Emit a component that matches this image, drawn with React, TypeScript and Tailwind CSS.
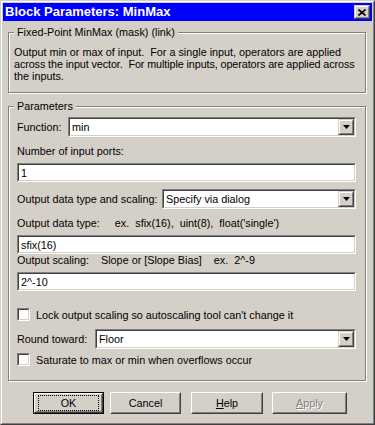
import React from "react";

function Sunken({ className, children }: { className?: string; children?: React.ReactNode }) {
  return (
    <div className={"border border-t-[#808080] border-l-[#808080] border-r-white border-b-white " + (className || "")}>
      <div className="h-full w-full border border-t-[#404040] border-l-[#404040] border-r-[#d4d0c8] border-b-[#d4d0c8] bg-white flex items-center">
        {children}
      </div>
    </div>
  );
}

function Raised({ className, children }: { className?: string; children?: React.ReactNode }) {
  return (
    <div className={"border border-t-[#d4d0c8] border-l-[#d4d0c8] border-r-[#404040] border-b-[#404040] bg-[#d4d0c8] " + (className || "")}>
      <div className="h-full w-full border border-t-white border-l-white border-r-[#808080] border-b-[#808080] flex items-center justify-center">
        {children}
      </div>
    </div>
  );
}

function Combo({ value, className }: { value: string; className?: string }) {
  return (
    <Sunken className={"h-[20px] " + (className || "")}>
      <span className="flex-1 pl-[2px] whitespace-pre">{value}</span>
      <Raised className="w-[16px] h-[16px]">
        <svg width="7" height="4" viewBox="0 0 7 4" className="block">
          <path d="M0 0H7L3.5 4Z" fill="#000" />
        </svg>
      </Raised>
    </Sunken>
  );
}

function Field({ value }: { value: string }) {
  return (
    <Sunken className="h-[19px]">
      <span className="pl-[2px] whitespace-pre">{value}</span>
    </Sunken>
  );
}

function Check({ label }: { label: string }) {
  return (
    <div className="flex items-center h-[13px]">
      <Sunken className="w-[13px] h-[13px]" />
      <span className="ml-[6px] whitespace-pre">{label}</span>
    </div>
  );
}

function GroupBox({ label, className, children }: { label: string; className?: string; children?: React.ReactNode }) {
  return (
    <div className={"relative border border-[#808080] shadow-[inset_1px_1px_0_#fff,1px_1px_0_#fff] " + (className || "")}>
      <span className="absolute top-[-7px] left-[5px] px-[3px] bg-[#d4d0c8] leading-[12px] whitespace-pre">{label}</span>
      {children}
    </div>
  );
}

function Button({ children, className, isDefault }: { children: React.ReactNode; className?: string; isDefault?: boolean }) {
  const inner = (
    <div className="h-full w-full border border-t-white border-l-white border-r-[#404040] border-b-[#404040]">
      <div className="h-full w-full border border-t-[#d4d0c8] border-l-[#d4d0c8] border-r-[#808080] border-b-[#808080] flex items-center justify-center">
        {isDefault ? (
          <div className="w-full h-full m-[2px] border border-dotted border-black flex items-center justify-center">{children}</div>
        ) : (
          children
        )}
      </div>
    </div>
  );
  return (
    <div className={"h-[22px] " + (isDefault ? "border border-black " : "") + (className || "")}>{inner}</div>
  );
}

export default function App() {
  return (
    <div className="w-[375px] h-[425px] bg-[#d4d0c8] border border-t-[#d4d0c8] border-l-[#d4d0c8] border-r-[#404040] border-b-[#404040] font-['Liberation_Sans',Arial,sans-serif] text-[10.8px] leading-[12px] text-black overflow-hidden">
      <div className="h-full border border-t-white border-l-white border-r-[#808080] border-b-[#808080] p-px flex flex-col">
        <div className="h-[18px] bg-[#0000ff] flex items-center pl-[2px] pr-[2px] shrink-0">
          <span className="text-white font-bold text-[13px] flex-1 whitespace-pre">Block Parameters: MinMax</span>
          <Raised className="w-[16px] h-[14px]">
            <svg width="8" height="7" viewBox="0 0 8 7" className="block">
              <path d="M0.5 0.5L7.5 6.5M7.5 0.5L0.5 6.5" stroke="#000" strokeWidth="1.6" />
            </svg>
          </Raised>
        </div>

        <GroupBox label="Fixed-Point MinMax (mask) (link)" className="mt-[11px] ml-[5px] mr-[6px] h-[61px] pt-[13px] pl-[5px] shrink-0">
          <div className="whitespace-pre">Output min or max of input.  For a single input, operators are applied</div>
          <div className="whitespace-pre tracking-[-0.1px]">across the input vector.  For multiple inputs, operators are applied across</div>
          <div className="whitespace-pre">the inputs.</div>
        </GroupBox>

        <GroupBox label="Parameters" className="mt-[13px] ml-[5px] mr-[6px] h-[275px] pl-[8px] pr-[9px] flex flex-col shrink-0">
          <div className="mt-[10px] flex items-center">
            <span className="w-[51px] whitespace-pre">Function:</span>
            <Combo value="min" className="flex-1" />
          </div>
          <div className="mt-[8px] h-[12px] whitespace-pre">Number of input ports:</div>
          <div className="mt-[6px]"><Field value="1" /></div>
          <div className="mt-[7px] flex items-center">
            <span className="w-[145px] whitespace-pre">Output data type and scaling:</span>
            <Combo value="Specify via dialog" className="flex-1" />
          </div>
          <div className="mt-[8px] h-[12px] whitespace-pre">Output data type:     ex.  sfix(16),  uint(8),  float('single')</div>
          <div className="mt-[6px]"><Field value="sfix(16)" /></div>
          <div className="mt-0 h-[12px] whitespace-pre">Output scaling:    Slope or [Slope Bias]    ex.  2^-9</div>
          <div className="mt-[6px]"><Field value="2^-10" /></div>
          <div className="mt-[17px]"><Check label="Lock output scaling so autoscaling tool can't change it" /></div>
          <div className="mt-[8px] flex items-center">
            <span className="w-[78px] whitespace-pre">Round toward:</span>
            <Combo value="Floor" className="flex-1" />
          </div>
          <div className="mt-[4px]"><Check label="Saturate to max or min when overflows occur" /></div>
        </GroupBox>

        <div className="mt-[11px] flex pl-[30px]">
          <Button isDefault className="w-[71px]">OK</Button>
          <Button className="w-[71px] ml-[6px]">Cancel</Button>
          <Button className="w-[72px] ml-[10px]"><span><span className="underline">H</span>elp</span></Button>
          <Button className="w-[75px] ml-[9px]">
            <span className="text-[#808080] [text-shadow:1px_1px_0_#fff]"><span className="underline">A</span>pply</span>
          </Button>
        </div>
      </div>
    </div>
  );
}
